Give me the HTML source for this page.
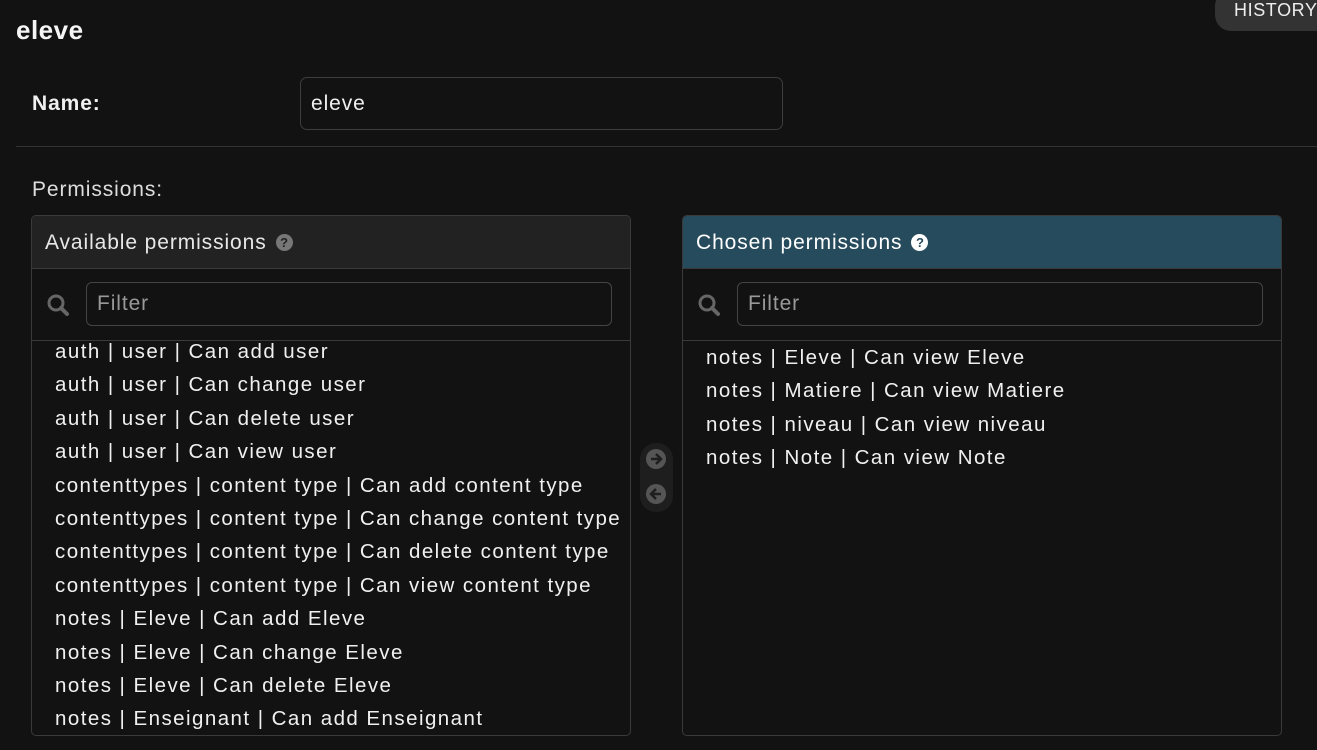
<!DOCTYPE html>
<html><head><style>
body{margin:0;background:#121212;width:1317px;height:750px;overflow:hidden;font-family:"Liberation Sans",sans-serif;color:#f0f0f0;position:relative;letter-spacing:0.9px}
.a{position:absolute}
h1{position:absolute;left:16px;top:15px;margin:0;font-size:26px;font-weight:bold;color:#f5f5f5;letter-spacing:0.5px}
.hist{left:1215px;top:-10px;width:120px;height:41px;background:#333;border-radius:16px;color:#eee;font-size:18px;box-sizing:border-box;padding:10px 0 0 19px;letter-spacing:0.6px}
.box{border:1px solid #3a3a3a;border-radius:5px;overflow:hidden;box-sizing:border-box}
.hd{height:53px;border-bottom:1px solid #3a3a3a;font-size:21px;padding:15px 0 0 13px;box-sizing:border-box}
.fr{height:71px;border-bottom:1px solid #3a3a3a;position:relative}
.fi{position:absolute;left:54px;top:13px;right:18px;height:44px;border:1px solid #444;border-radius:6px;box-sizing:border-box;font-size:21px;color:#999;padding:9px 0 0 10px}
.items{padding-left:23px;font-size:20.5px;line-height:33.4px;letter-spacing:1.45px;white-space:nowrap}
.q{display:inline-block;width:17px;height:17px;border-radius:50%;font-size:13px;line-height:17px;text-align:center;font-weight:bold;vertical-align:2px;margin-left:9px;letter-spacing:0}
</style></head><body>
<h1>eleve</h1>
<div class="a hist">HISTORY</div>
<div class="a" style="left:32px;top:92px;font-size:21px;font-weight:bold">Name:</div>
<div class="a" style="left:300px;top:77px;width:483px;height:53px;border:1px solid #3d3d3d;border-radius:7px;box-sizing:border-box;font-size:21px;padding:14px 0 0 10px">eleve</div>
<div class="a" style="left:16px;top:146px;width:1301px;height:1px;background:#333"></div>
<div class="a" style="left:32px;top:178px;font-size:21px;color:#ddd">Permissions:</div>

<div class="a box" style="left:31px;top:215px;width:600px;height:521px">
<div class="hd" style="background:#222;color:#e8e8e8">Available permissions<span class="q" style="background:#777;color:#222">?</span></div>
<div class="fr"><svg class="a" style="left:14px;top:24px" width="24" height="24" viewBox="0 0 24 24"><circle cx="10" cy="10" r="7" fill="none" stroke="#666" stroke-width="3"/><path d="M15 15l6 6" stroke="#666" stroke-width="4" stroke-linecap="round"/></svg><div class="fi">Filter</div></div>
<div class="items" style="margin-top:-6px">auth | user | Can add user<br>auth | user | Can change user<br>auth | user | Can delete user<br>auth | user | Can view user<br>contenttypes | content type | Can add content type<br>contenttypes | content type | Can change content type<br>contenttypes | content type | Can delete content type<br>contenttypes | content type | Can view content type<br>notes | Eleve | Can add Eleve<br>notes | Eleve | Can change Eleve<br>notes | Eleve | Can delete Eleve<br>notes | Enseignant | Can add Enseignant</div>
</div>

<div class="a" style="left:640px;top:443px;width:33px;height:69px;background:#1e1e1e;border-radius:16px"></div>
<svg class="a" style="left:645px;top:448px" width="22" height="58" viewBox="0 0 22 58"><circle cx="11" cy="11" r="10" fill="#555"/><path d="M6 11h9M11 6l5 5-5 5" stroke="#1e1e1e" stroke-width="2.5" fill="none"/><circle cx="11" cy="46" r="10" fill="#555"/><path d="M16 46H7M11 41l-5 5 5 5" stroke="#1e1e1e" stroke-width="2.5" fill="none"/></svg>

<div class="a box" style="left:682px;top:215px;width:600px;height:521px">
<div class="hd" style="background:#264b5d;color:#fff">Chosen permissions<span class="q" style="background:#fff;color:#264b5d">?</span></div>
<div class="fr"><svg class="a" style="left:14px;top:24px" width="24" height="24" viewBox="0 0 24 24"><circle cx="10" cy="10" r="7" fill="none" stroke="#666" stroke-width="3"/><path d="M15 15l6 6" stroke="#666" stroke-width="4" stroke-linecap="round"/></svg><div class="fi">Filter</div></div>
<div class="items" style="margin-top:0px">notes | Eleve | Can view Eleve<br>notes | Matiere | Can view Matiere<br>notes | niveau | Can view niveau<br>notes | Note | Can view Note</div>
</div>
</body></html>
